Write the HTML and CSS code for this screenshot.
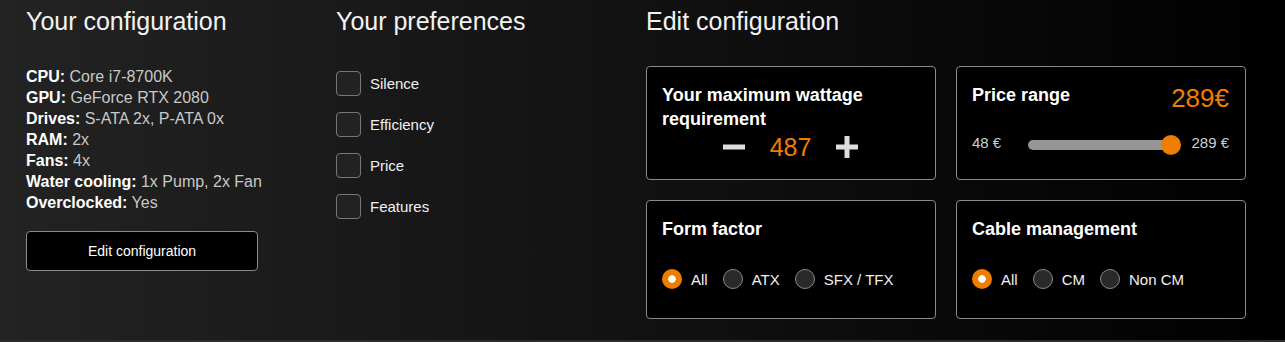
FILE: index.html
```html
<!DOCTYPE html>
<html>
<head>
  <link rel="stylesheet" href="styles.css">
</head>
<body>
  <div class="page">
    <div class="col">
      <h2 class="col-title">Your configuration</h2>
      <ul class="spec-list">
        <li><b>CPU:</b> Core i7-8700K</li>
        <li><b>GPU:</b> GeForce RTX 2080</li>
        <li><b>Drives:</b> S-ATA 2x, P-ATA 0x</li>
        <li><b>RAM:</b> 2x</li>
        <li><b>Fans:</b> 4x</li>
        <li><b>Water cooling:</b> 1x Pump, 2x Fan</li>
        <li><b>Overclocked:</b> Yes</li>
      </ul>
      <button class="edit-btn">Edit configuration</button>
    </div>
    <div class="col">
      <h2 class="col-title">Your preferences</h2>
      <div class="pref-list">
        <label class="pref"><span class="checkbox"></span>Silence</label>
        <label class="pref"><span class="checkbox"></span>Efficiency</label>
        <label class="pref"><span class="checkbox"></span>Price</label>
        <label class="pref"><span class="checkbox"></span>Features</label>
      </div>
    </div>
    <div class="col col-edit">
      <h2 class="col-title">Edit configuration</h2>
      <div class="card-grid">
        <div class="card">
          <div class="card-title">Your maximum wattage requirement</div>
          <div class="stepper">
            <button class="step-btn">
              <svg width="22" height="22" viewBox="0 0 22 22"><rect x="0" y="8.5" width="22" height="5" fill="#ddd"/></svg>
            </button>
            <span class="step-value">487</span>
            <button class="step-btn">
              <svg width="22" height="22" viewBox="0 0 22 22"><rect x="0" y="8.5" width="22" height="5" fill="#ddd"/><rect x="8.5" y="0" width="5" height="22" fill="#ddd"/></svg>
            </button>
          </div>
        </div>
        <div class="card">
          <div class="card-head">
            <div class="card-title">Price range</div>
            <div class="price-value">289€</div>
          </div>
          <div class="range-row">
            <span class="range-label">48 €</span>
            <div class="slider">
              <div class="slider-track"></div>
              <div class="slider-thumb"></div>
            </div>
            <span class="range-label">289 €</span>
          </div>
        </div>
        <div class="card">
          <div class="card-title">Form factor</div>
          <div class="radio-group">
            <label class="radio-item"><span class="radio checked"></span>All</label>
            <label class="radio-item"><span class="radio"></span>ATX</label>
            <label class="radio-item"><span class="radio"></span>SFX / TFX</label>
          </div>
        </div>
        <div class="card">
          <div class="card-title">Cable management</div>
          <div class="radio-group">
            <label class="radio-item"><span class="radio checked"></span>All</label>
            <label class="radio-item"><span class="radio"></span>CM</label>
            <label class="radio-item"><span class="radio"></span>Non CM</label>
          </div>
        </div>
      </div>
    </div>
  </div>
</body>
</html>
```

FILE: styles.css
```css
body {
  margin: 0;
  font-family: "Liberation Sans", Arial, sans-serif;
  background: #000;
  color: #eee;
}
.page {
  display: flex;
  height: 340px;
  padding-left: 26px;
  background: linear-gradient(to right, #232323, #000);
  border-bottom: 2px solid #2c2c2c;
}
.col {
  width: 310px;
  flex-shrink: 0;
}
.col-edit {
  width: auto;
}
.col-title {
  font-size: 25px;
  font-weight: normal;
  line-height: 28px;
  margin: 7px 0 31px;
  color: #f2f2f2;
}
.spec-list {
  list-style: none;
  margin: 0;
  padding: 0;
  font-size: 16px;
  line-height: 21px;
  color: #c8c8c8;
}
.spec-list b {
  color: #fff;
}
.edit-btn {
  display: block;
  margin-top: 18px;
  width: 232px;
  height: 40px;
  background: #000;
  border: 1px solid #8a8a8a;
  border-radius: 4px;
  color: #fff;
  font-family: inherit;
  font-size: 14px;
  cursor: pointer;
}
.pref-list {
  display: flex;
  flex-direction: column;
  gap: 16px;
  padding-top: 5px;
}
.pref {
  display: flex;
  align-items: center;
  gap: 9px;
  font-size: 15px;
  line-height: 25px;
  color: #f0f0f0;
}
.checkbox {
  width: 23px;
  height: 23px;
  border: 1px solid #777;
  border-radius: 4px;
  background: #222;
}
.card-grid {
  display: grid;
  grid-template-columns: 290px 290px;
  gap: 20px;
}
.card {
  background: #000;
  border: 1px solid #8a8a8a;
  border-radius: 4px;
  padding: 16px 16px 16px 15px;
}
.card-title {
  font-size: 18px;
  font-weight: bold;
  line-height: 24px;
  color: #fff;
}
.stepper {
  display: flex;
  align-items: center;
  justify-content: center;
  gap: 25px;
  height: 32px;
}
.step-btn {
  background: none;
  border: none;
  padding: 0;
  display: flex;
  cursor: pointer;
}
.step-value {
  font-size: 25px;
  color: #ef7d00;
}
.card-head {
  display: flex;
  justify-content: space-between;
  align-items: flex-start;
}
.price-value {
  font-size: 26px;
  color: #ef7d00;
}
.range-row {
  display: flex;
  align-items: center;
  margin-top: 21px;
}
.range-label {
  font-size: 15px;
  color: #c8d0d8;
  margin-top: -6px;
}
.slider {
  position: relative;
  flex: 1;
  height: 20px;
  margin: 0 10px 0 27px;
}
.slider-track {
  position: absolute;
  left: 0;
  right: 10px;
  top: 5px;
  height: 10px;
  border-radius: 5px;
  background: #969696;
}
.slider-thumb {
  position: absolute;
  right: 0;
  top: 0;
  width: 20px;
  height: 20px;
  border-radius: 50%;
  background: #ef7d00;
}
.radio-group {
  display: flex;
  align-items: center;
  gap: 15px;
  margin: 28px 0 13px;
}
.radio-item {
  display: flex;
  align-items: center;
  gap: 9px;
  font-size: 15px;
  color: #f0f0f0;
}
.radio {
  width: 18px;
  height: 18px;
  border: 1px solid #888;
  border-radius: 50%;
  background: #2a2a2a;
}
.radio.checked {
  width: 20px;
  height: 20px;
  border: none;
  background: radial-gradient(circle, #fff 0 3.5px, #ef7d00 4px);
}
```
